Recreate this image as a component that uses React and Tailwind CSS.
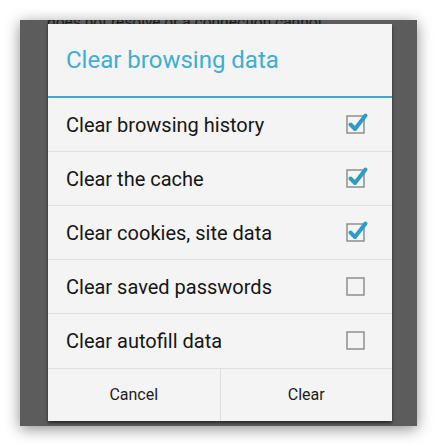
import React from 'react';

const items = [
  { label: 'Clear browsing history', checked: true },
  { label: 'Clear the cache', checked: true },
  { label: 'Clear cookies, site data', checked: true },
  { label: 'Clear saved passwords', checked: false },
  { label: 'Clear autofill data', checked: false },
];

const CheckBox = ({ checked }) => (
  <svg width="24" height="24" viewBox="0 0 24 24" className="overflow-visible">
    <rect x="3" y="3" width="17" height="17" fill="none" stroke="#8e8e8e" strokeWidth="1.5" />
    {checked && (
      <path d="M6.5 11.5 L11 16 L21.5 2.5" fill="none" stroke="#2b9dc6" strokeWidth="4" strokeLinecap="round" strokeLinejoin="round" />
    )}
  </svg>
);

export default function App() {
  return (
    <div className="w-[437px] h-[446px] bg-white p-5 font-['Roboto',sans-serif]">
      <div className="relative w-[397px] h-[406px] bg-[#5c5c5c] pt-1 pl-7 overflow-hidden shadow-[0_3px_14px_rgba(0,0,0,0.45)]">
        {/* page text behind the dialog */}
        <div className="absolute left-[27px] top-[-8px] font-['Roboto',sans-serif] text-[15.5px] leading-[20px] text-[#1a1a1a] whitespace-nowrap">
          does not resolve or a connection cannot
        </div>

        <div className="relative w-[344px] h-[397px] bg-[#f4f4f4] flex flex-col shadow-[0_2px_3px_rgba(0,0,0,0.6)]">
          <div className="h-[72px] flex items-center pl-[18px] text-[24px] text-[#3eaed2]">
            Clear browsing data
          </div>
          <div className="h-[2px] bg-[#38a9d3]" />

          {items.map((it, i) => (
            <div
              key={it.label}
              className={`h-[54px] flex items-center justify-between pl-[18px] pr-[24px] ${i < items.length - 1 ? 'border-b border-[#dedede]' : ''}`}
            >
              <span className="text-[20px] text-[#161616]">{it.label}</span>
              <CheckBox checked={it.checked} />
            </div>
          ))}

          <div className="flex-1 flex border-t border-[#dedede]">
            <div className="flex-1 flex items-center justify-center text-[16px] text-[#1c1c1c] border-r border-[#dedede]">
              Cancel
            </div>
            <div className="flex-1 flex items-center justify-center text-[16px] text-[#1c1c1c]">
              Clear
            </div>
          </div>
        </div>
      </div>
    </div>
  );
}
